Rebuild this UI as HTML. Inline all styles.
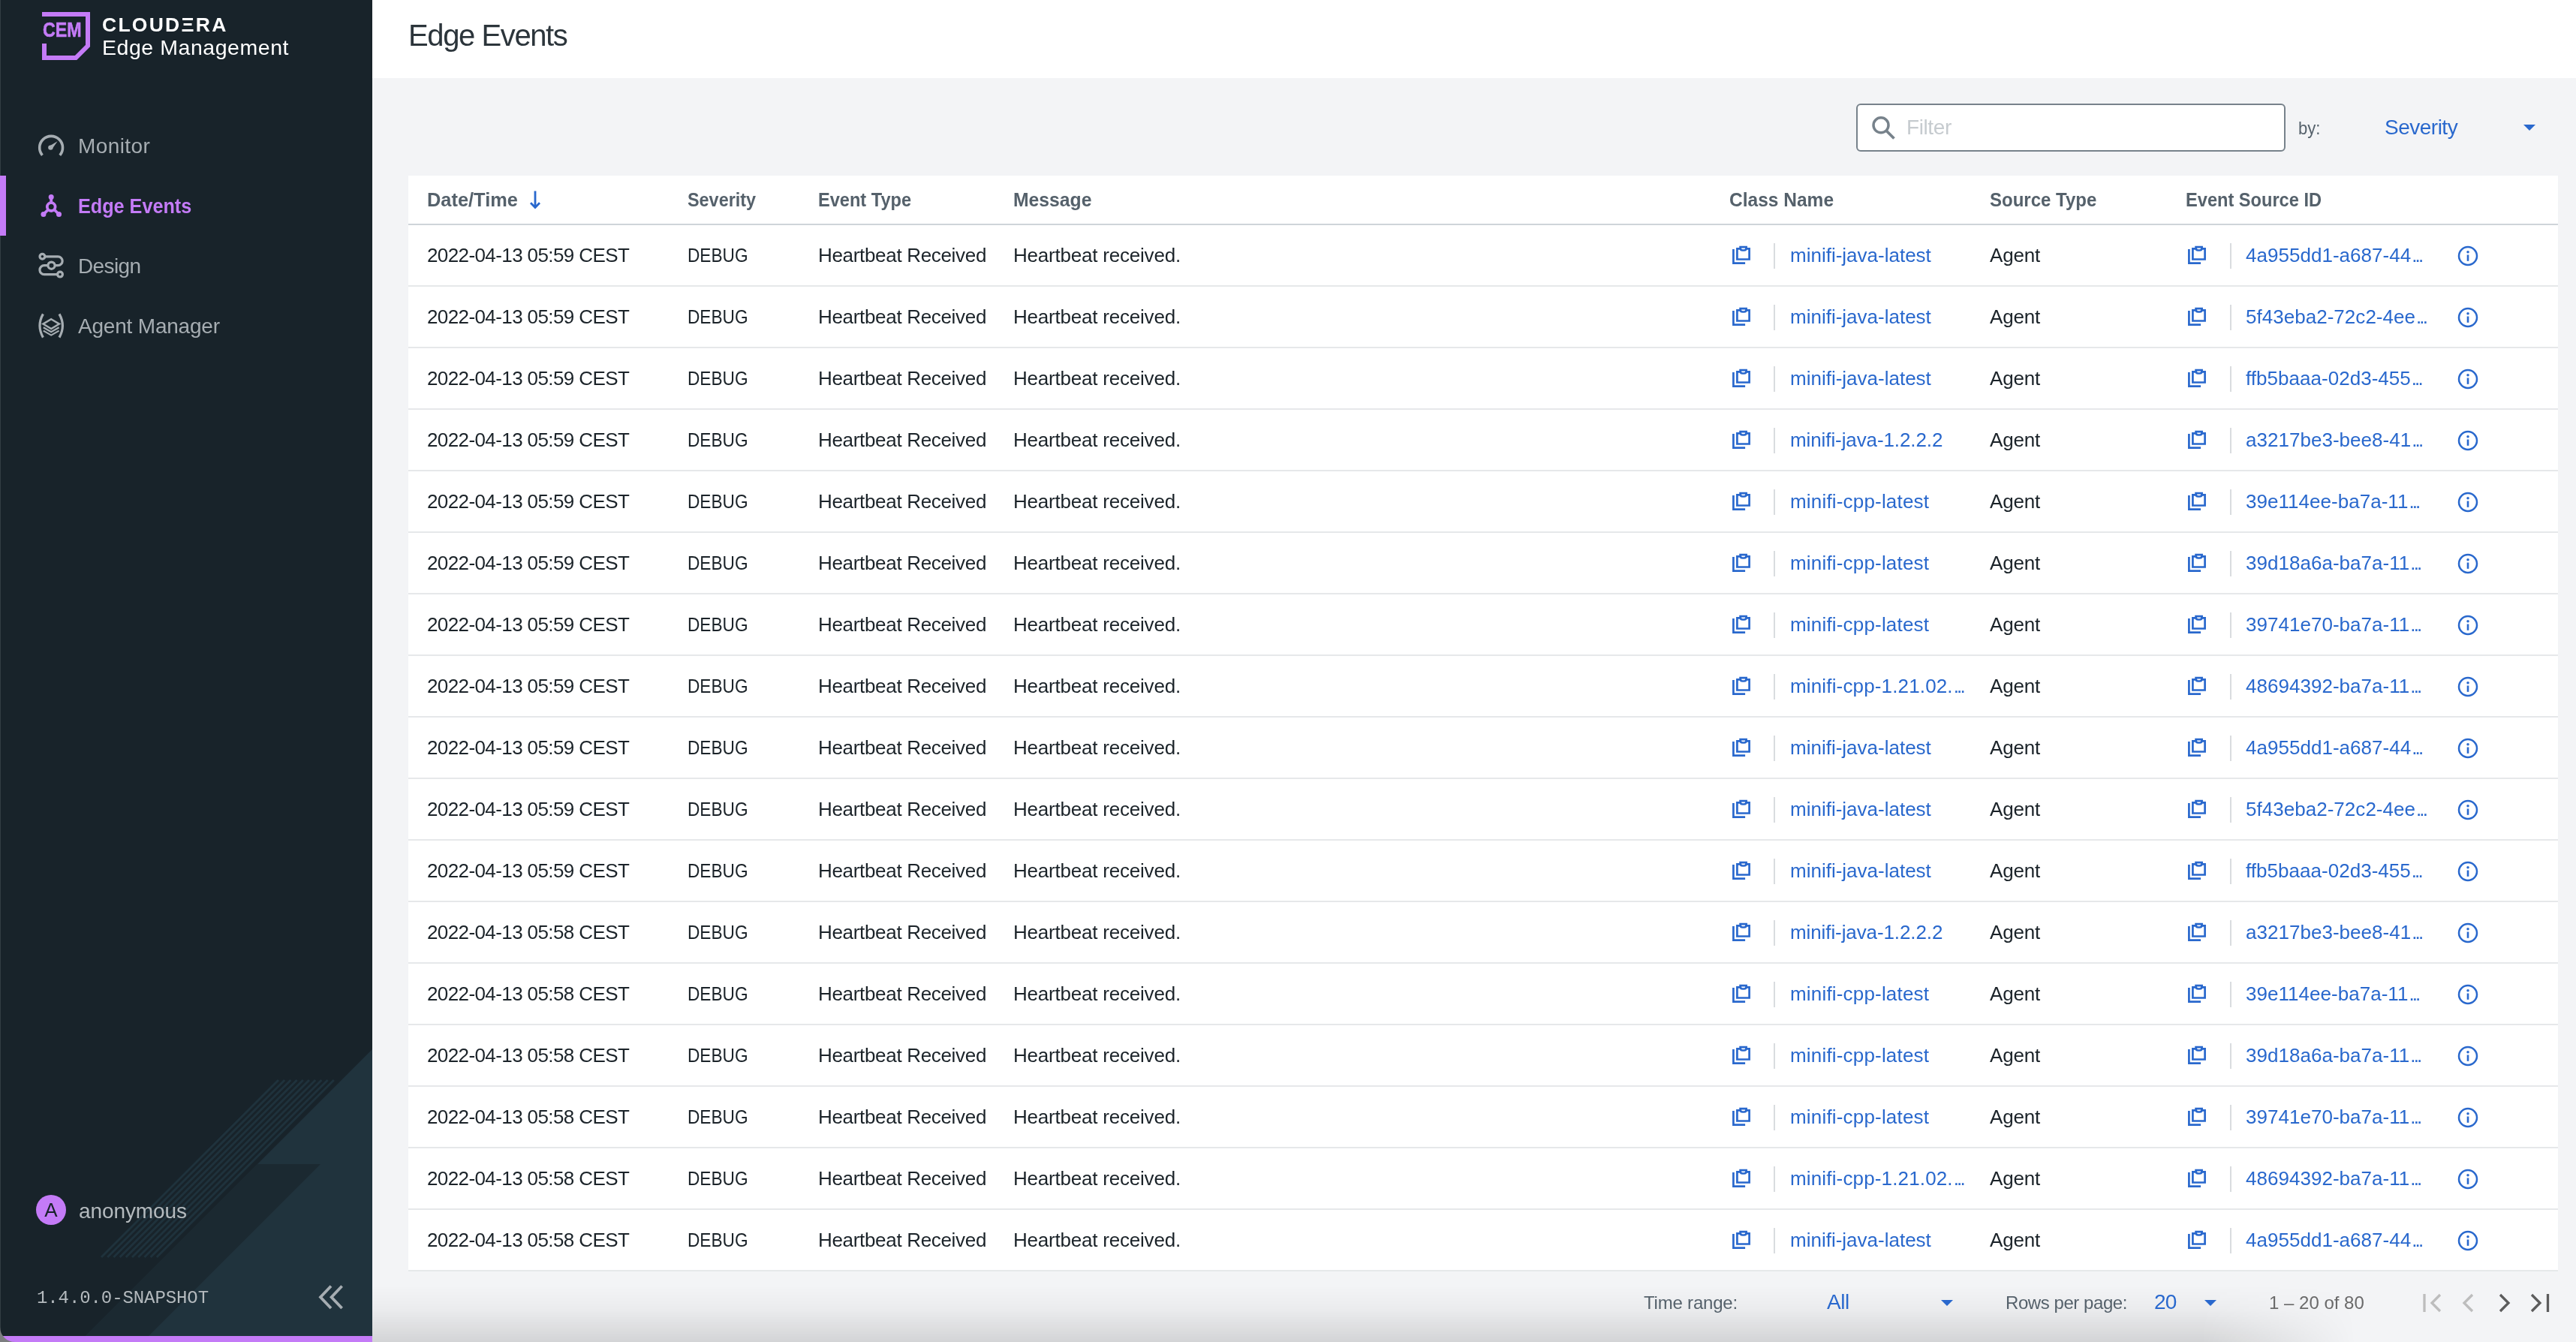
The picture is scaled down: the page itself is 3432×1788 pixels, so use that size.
<!DOCTYPE html>
<html lang="en"><head><meta charset="utf-8"><title>Edge Events</title>
<style>
*{box-sizing:border-box;margin:0;padding:0}
html,body{width:3432px;height:1788px;overflow:hidden}
body{will-change:transform;position:relative;background:#f3f4f6;font-family:"Liberation Sans",sans-serif;color:#1b2329;-webkit-font-smoothing:antialiased}
.abs,.side *,.top *,.foot *{position:absolute}
svg{display:block;overflow:visible}
.sx{display:inline-block;transform:scaleX(var(--s));transform-origin:0 50%;font-style:normal;font-weight:inherit;position:static!important}
.t{white-space:pre;line-height:1}
/* sidebar */
.side{position:absolute;left:0;top:0;width:496px;height:1788px;background:#18232a;overflow:hidden}
.side .deco{left:0;top:1380px;width:496px;height:408px}
.side .bar{left:0;bottom:0;width:496px;height:8px;background:#c47bf7}
.side .edge{left:0;top:0;width:1px;height:1788px;background:#333d43}
.side .active{left:0;top:234px;width:8px;height:80px;background:#c47bf7}
.nav{left:104px;font-size:28px;color:#a6adb2;white-space:pre;line-height:32px}
.nav.on{color:#c47bf7;font-weight:700}
.brand1{left:136px;top:19.5px;font-size:26.5px;font-weight:700;color:#fff;letter-spacing:2.25px;line-height:1;white-space:pre}
.brand2{left:136px;top:49px;font-size:28.5px;color:#fff;letter-spacing:.55px;line-height:1;white-space:pre}
.cem{left:56.5px;top:26.5px;font-size:27px;font-weight:700;color:#c47bf7;-webkit-text-stroke:.6px #c47bf7;line-height:1;white-space:pre}
.user{left:105px;top:1597.5px;font-size:28px;color:#b4babe;line-height:32px;white-space:pre}
.ver{left:49px;top:1716px;font:24px/28px "Liberation Mono",monospace;color:#b4babe;white-space:pre;letter-spacing:-.09px}
.avatar{left:48px;top:1592px;width:40px;height:40px;border-radius:50%;background:#c47bf7;color:#18232a;font-size:26px;line-height:41px;text-align:center}
/* top */
.top{position:absolute;left:496px;top:0;width:2936px;height:234px}
.top .hdr{left:0;top:0;width:2936px;height:104px;background:#fff}
.top .title{left:48px;top:26.7px;font-size:40px;line-height:1;color:#2c353b;white-space:pre;letter-spacing:-1.4px}
.top .inp{left:1977px;top:138px;width:572px;height:64px;border:2px solid #77828b;border-radius:6px;background:#fff}
.top .ph{left:2044px;top:152px;font-size:28px;line-height:36px;color:#c6cbcf;letter-spacing:-.4px;white-space:pre}
.top .by{left:2566px;top:152.5px;font-size:24.5px;line-height:36px;color:#55616b;white-space:pre}
.top .sel{left:2681px;top:152px;font-size:28px;line-height:36px;color:#2968cd;white-space:pre;letter-spacing:-.5px}
/* table */
.tbl{position:absolute;left:544px;top:234px;width:2864px;height:1460px;background:#fff;overflow:hidden}
.thead{position:absolute;left:0;top:0;width:100%;height:66px;border-bottom:2px solid #cfd4d9}
.thead .h{position:absolute;top:0;font-size:26px;font-weight:700;color:#55616b;line-height:64.5px;white-space:pre}
.sort{position:absolute;left:161px;top:19px;width:16px;height:26px}
.tr{position:absolute;left:0;width:100%;height:82px;border-bottom:2px solid #e6e8ea}
.c{position:absolute;top:0;font-size:26px;line-height:80px;white-space:pre}
.dt{letter-spacing:-.6px}
.et{letter-spacing:-.32px}
.ms{letter-spacing:-.21px}
.ag{letter-spacing:-.2px}
.lk{color:#2968cd}
.id{letter-spacing:.03px}
.el{font-style:normal;letter-spacing:-2.9px;margin-left:1px}
.ic{position:absolute;top:27px;width:24px;height:24px}
.cp{width:24px;height:24px}
.cp path{fill:none;stroke:#2968cd;stroke-width:2.7}
.cp path.clip{fill:#fff}
.dv{position:absolute;top:24px;width:2px;height:34px;background:#d9dcdf}
.ii{position:absolute;top:27px;width:28px;height:28px}
.inf{width:28px;height:28px}
/* footer */
.foot{position:absolute;left:496px;top:1694px;width:2936px;height:94px}
.foot .shade{left:0;top:0;width:2936px;height:94px;background:linear-gradient(to bottom,rgba(0,0,0,0) 20%,rgba(0,0,0,.035) 55%,rgba(0,0,0,.13) 100%);-webkit-mask-image:linear-gradient(to right,#000 0,#000 83%,transparent 90%);mask-image:linear-gradient(to right,#000 0,#000 83%,transparent 90%)}
.foot .l{font-size:24px;line-height:30px;color:#55616b;white-space:pre;top:27px}
.foot .v{font-size:28px;line-height:34px;color:#2968cd;white-space:pre;top:24px}

</style></head>
<body>
<div class="side">
<svg class="deco" viewBox="0 1380 496 408">

<path d="M496 1398L114 1780H496Z" fill="#20333d"/><path d="M343 1551H427L198 1780H114Z" fill="#1b2931"/>
<path d="M371.0 1439L135.0 1675M379.2 1439L143.2 1675M387.4 1439L151.4 1675M395.6 1439L159.6 1675M403.8 1439L167.8 1675M412.0 1439L176.0 1675M420.2 1439L184.2 1675M428.4 1439L192.4 1675M436.6 1439L200.6 1675M444.8 1439L208.8 1675" stroke="#1f323c" stroke-width="3" fill="none"/>
</svg>
<div class="edge"></div>
<svg style="left:0;top:1768px;width:20px;height:20px;z-index:3" viewBox="0 0 20 20"><path d="M0 0V20H20A20 20 0 0 1 0 0Z" fill="#7c7e80"/></svg>
<div class="bar"></div>
<div class="active"></div>
<!-- logo -->
<svg style="left:56px;top:16px;width:64px;height:64px" viewBox="0 0 64 64"><path d="M0 3H61V45L45 61H3V42" fill="none" stroke="#c47bf7" stroke-width="6"/></svg>
<span class="cem"><i class="sx" style="--s:.86">CEM</i></span>
<span class="brand1">CLOUD&#926;RA</span>
<span class="brand2">Edge Management</span>
<!-- nav -->
<svg style="left:48px;top:174px;width:40px;height:40px" viewBox="48 174 40 40"><path d="M56.4 206.8A15.4 15.4 0 1 1 79.8 206.8" fill="none" stroke="#a6adb2" stroke-width="3.6"/><circle cx="67.4" cy="196.6" r="3.2" fill="#a6adb2"/><path d="M65.6 194.8L76.6 188.2L69.4 198.6Z" fill="#a6adb2"/></svg>
<span class="nav" style="top:179px;letter-spacing:.4px">Monitor</span>
<svg style="left:48px;top:254px;width:40px;height:40px" viewBox="48 254 40 40"><g stroke="#c47bf7" stroke-width="3.8" fill="none"><circle cx="68.2" cy="275.6" r="5.4"/><path d="M68.2 270V262.5M64 279.5L58 285.3M72.4 279.5L78.4 285.3"/></g><g fill="#c47bf7"><circle cx="68.2" cy="262.5" r="3.5"/><circle cx="57.9" cy="285.4" r="3.5"/><circle cx="78.5" cy="285.4" r="3.5"/></g></svg>
<span class="nav on" style="top:259px"><i class="sx" style="--s:.9">Edge Events</i></span>
<svg style="left:48px;top:334px;width:40px;height:40px" viewBox="48 334 40 40"><g stroke="#a6adb2" stroke-width="3.2" fill="none"><circle cx="56.4" cy="341.8" r="3.4"/><circle cx="68.5" cy="353.7" r="4.6"/><circle cx="80" cy="365.6" r="3.4"/><path d="M59.8 341.8H77.2A5.95 5.95 0 0 1 77.2 353.7H73.1M63.9 353.7H58.9A5.95 5.95 0 0 0 58.9 365.6H76.6"/></g></svg>
<span class="nav" style="top:339px;letter-spacing:-.6px">Design</span>
<svg style="left:48px;top:414px;width:40px;height:40px" viewBox="48 414 40 40"><g stroke="#a6adb2" stroke-width="3.2" fill="none"><path d="M57.4 418.4Q48.6 434 57.4 449.6M79 418.4Q87.8 434 79 449.6"/><path d="M68.2 425.2L79 431.6L68.2 438L57.4 431.6Z" stroke-width="2.4"/><path d="M57.8 436.2L68.2 442.2L78.6 436.2M57.8 440.6L68.2 446.6L78.6 440.6" stroke-width="2.2"/></g></svg>
<span class="nav" style="top:419px;letter-spacing:-.2px">Agent Manager</span>
<!-- user -->
<div class="avatar">A</div>
<span class="user" style="letter-spacing:-.1px">anonymous</span>
<span class="ver">1.4.0.0-SNAPSHOT</span>
<svg style="left:420px;top:1708px;width:40px;height:40px" viewBox="420 1708 40 40"><path d="M441 1713.5L427 1728.2L441 1743M455.6 1713.5L441.6 1728.2L455.6 1743" fill="none" stroke="#a6adb2" stroke-width="3.8"/></svg>
</div>
<div class="top">
<div class="hdr"></div>
<span class="title">Edge Events</span>
<div class="inp"></div>
<svg style="left:1996px;top:153px;width:34px;height:34px" viewBox="2492 153 34 34"><circle cx="2506" cy="166.8" r="10" fill="none" stroke="#77828b" stroke-width="3.5"/><path d="M2513 174L2523.5 184.5" stroke="#77828b" stroke-width="3.8"/></svg>
<span class="ph">Filter</span>
<span class="by"><i class="sx" style="--s:.9">by:</i></span>
<span class="sel">Severity</span>
<svg style="left:2866px;top:166px;width:16px;height:8px" viewBox="0 0 16 8"><path d="M0 0H16L8 8Z" fill="#2968cd"/></svg>
</div>
<div class="tbl">
<div class="thead"><span class="h" style="left:25px"><b class="sx" style="--s:.977">Date/Time</b></span><svg class="sort" viewBox="0 0 16 26"><path d="M8 1.5V23M2 17.2L8 23.4L14 17.2" fill="none" stroke="#2968cd" stroke-width="2.8"/></svg><span class="h" style="left:372px"><b class="sx" style="--s:.90">Severity</b></span><span class="h" style="left:546px"><b class="sx" style="--s:.907">Event Type</b></span><span class="h" style="left:806px"><b class="sx" style="--s:.951">Message</b></span><span class="h" style="left:1760px"><b class="sx" style="--s:.943">Class Name</b></span><span class="h" style="left:2107px"><b class="sx" style="--s:.924">Source Type</b></span><span class="h" style="left:2368px"><b class="sx" style="--s:.908">Event Source ID</b></span></div>
<div class="tr" style="top:66px"><span class="c dt" style="left:25px">2022-04-13 05:59 CEST</span><span class="c" style="left:372px"><i class="sx" style="--s:.871">DEBUG</i></span><span class="c et" style="left:546px">Heartbeat Received</span><span class="c ms" style="left:806px">Heartbeat received.</span><span class="ic" style="left:1764px"><svg class="cp" viewBox="0 0 24 24"><path d="M1.4 5.1V23.6H17.1"/><path d="M6.4 4.4H22.6V18.5H6.4Z"/><path d="M10.6 2.2H18.6V3.2Q18.6 6.5 15.6 6.5H13.6Q10.6 6.5 10.6 3.2Z" class="clip"/></svg></span><span class="dv" style="left:1819px"></span><span class="c lk cn" style="left:1841px;letter-spacing:0px">minifi-java-latest</span><span class="c ag" style="left:2107px">Agent</span><span class="ic" style="left:2371px"><svg class="cp" viewBox="0 0 24 24"><path d="M1.4 5.1V23.6H17.1"/><path d="M6.4 4.4H22.6V18.5H6.4Z"/><path d="M10.6 2.2H18.6V3.2Q18.6 6.5 15.6 6.5H13.6Q10.6 6.5 10.6 3.2Z" class="clip"/></svg></span><span class="dv" style="left:2427px"></span><span class="c lk id" style="left:2448px">4a955dd1-a687-44<i class="el">...</i></span><span class="ii" style="left:2730px"><svg class="inf" viewBox="0 0 28 28"><circle cx="14" cy="14" r="12" fill="none" stroke="#2968cd" stroke-width="2.5"/><circle cx="14" cy="8.7" r="1.75" fill="#2968cd"/><rect x="12.7" y="12.5" width="2.6" height="8.3" fill="#2968cd"/></svg></span></div>
<div class="tr" style="top:148px"><span class="c dt" style="left:25px">2022-04-13 05:59 CEST</span><span class="c" style="left:372px"><i class="sx" style="--s:.871">DEBUG</i></span><span class="c et" style="left:546px">Heartbeat Received</span><span class="c ms" style="left:806px">Heartbeat received.</span><span class="ic" style="left:1764px"><svg class="cp" viewBox="0 0 24 24"><path d="M1.4 5.1V23.6H17.1"/><path d="M6.4 4.4H22.6V18.5H6.4Z"/><path d="M10.6 2.2H18.6V3.2Q18.6 6.5 15.6 6.5H13.6Q10.6 6.5 10.6 3.2Z" class="clip"/></svg></span><span class="dv" style="left:1819px"></span><span class="c lk cn" style="left:1841px;letter-spacing:0px">minifi-java-latest</span><span class="c ag" style="left:2107px">Agent</span><span class="ic" style="left:2371px"><svg class="cp" viewBox="0 0 24 24"><path d="M1.4 5.1V23.6H17.1"/><path d="M6.4 4.4H22.6V18.5H6.4Z"/><path d="M10.6 2.2H18.6V3.2Q18.6 6.5 15.6 6.5H13.6Q10.6 6.5 10.6 3.2Z" class="clip"/></svg></span><span class="dv" style="left:2427px"></span><span class="c lk id" style="left:2448px">5f43eba2-72c2-4ee<i class="el">...</i></span><span class="ii" style="left:2730px"><svg class="inf" viewBox="0 0 28 28"><circle cx="14" cy="14" r="12" fill="none" stroke="#2968cd" stroke-width="2.5"/><circle cx="14" cy="8.7" r="1.75" fill="#2968cd"/><rect x="12.7" y="12.5" width="2.6" height="8.3" fill="#2968cd"/></svg></span></div>
<div class="tr" style="top:230px"><span class="c dt" style="left:25px">2022-04-13 05:59 CEST</span><span class="c" style="left:372px"><i class="sx" style="--s:.871">DEBUG</i></span><span class="c et" style="left:546px">Heartbeat Received</span><span class="c ms" style="left:806px">Heartbeat received.</span><span class="ic" style="left:1764px"><svg class="cp" viewBox="0 0 24 24"><path d="M1.4 5.1V23.6H17.1"/><path d="M6.4 4.4H22.6V18.5H6.4Z"/><path d="M10.6 2.2H18.6V3.2Q18.6 6.5 15.6 6.5H13.6Q10.6 6.5 10.6 3.2Z" class="clip"/></svg></span><span class="dv" style="left:1819px"></span><span class="c lk cn" style="left:1841px;letter-spacing:0px">minifi-java-latest</span><span class="c ag" style="left:2107px">Agent</span><span class="ic" style="left:2371px"><svg class="cp" viewBox="0 0 24 24"><path d="M1.4 5.1V23.6H17.1"/><path d="M6.4 4.4H22.6V18.5H6.4Z"/><path d="M10.6 2.2H18.6V3.2Q18.6 6.5 15.6 6.5H13.6Q10.6 6.5 10.6 3.2Z" class="clip"/></svg></span><span class="dv" style="left:2427px"></span><span class="c lk id" style="left:2448px">ffb5baaa-02d3-455<i class="el">...</i></span><span class="ii" style="left:2730px"><svg class="inf" viewBox="0 0 28 28"><circle cx="14" cy="14" r="12" fill="none" stroke="#2968cd" stroke-width="2.5"/><circle cx="14" cy="8.7" r="1.75" fill="#2968cd"/><rect x="12.7" y="12.5" width="2.6" height="8.3" fill="#2968cd"/></svg></span></div>
<div class="tr" style="top:312px"><span class="c dt" style="left:25px">2022-04-13 05:59 CEST</span><span class="c" style="left:372px"><i class="sx" style="--s:.871">DEBUG</i></span><span class="c et" style="left:546px">Heartbeat Received</span><span class="c ms" style="left:806px">Heartbeat received.</span><span class="ic" style="left:1764px"><svg class="cp" viewBox="0 0 24 24"><path d="M1.4 5.1V23.6H17.1"/><path d="M6.4 4.4H22.6V18.5H6.4Z"/><path d="M10.6 2.2H18.6V3.2Q18.6 6.5 15.6 6.5H13.6Q10.6 6.5 10.6 3.2Z" class="clip"/></svg></span><span class="dv" style="left:1819px"></span><span class="c lk cn" style="left:1841px;letter-spacing:-0.1px">minifi-java-1.2.2.2</span><span class="c ag" style="left:2107px">Agent</span><span class="ic" style="left:2371px"><svg class="cp" viewBox="0 0 24 24"><path d="M1.4 5.1V23.6H17.1"/><path d="M6.4 4.4H22.6V18.5H6.4Z"/><path d="M10.6 2.2H18.6V3.2Q18.6 6.5 15.6 6.5H13.6Q10.6 6.5 10.6 3.2Z" class="clip"/></svg></span><span class="dv" style="left:2427px"></span><span class="c lk id" style="left:2448px">a3217be3-bee8-41<i class="el">...</i></span><span class="ii" style="left:2730px"><svg class="inf" viewBox="0 0 28 28"><circle cx="14" cy="14" r="12" fill="none" stroke="#2968cd" stroke-width="2.5"/><circle cx="14" cy="8.7" r="1.75" fill="#2968cd"/><rect x="12.7" y="12.5" width="2.6" height="8.3" fill="#2968cd"/></svg></span></div>
<div class="tr" style="top:394px"><span class="c dt" style="left:25px">2022-04-13 05:59 CEST</span><span class="c" style="left:372px"><i class="sx" style="--s:.871">DEBUG</i></span><span class="c et" style="left:546px">Heartbeat Received</span><span class="c ms" style="left:806px">Heartbeat received.</span><span class="ic" style="left:1764px"><svg class="cp" viewBox="0 0 24 24"><path d="M1.4 5.1V23.6H17.1"/><path d="M6.4 4.4H22.6V18.5H6.4Z"/><path d="M10.6 2.2H18.6V3.2Q18.6 6.5 15.6 6.5H13.6Q10.6 6.5 10.6 3.2Z" class="clip"/></svg></span><span class="dv" style="left:1819px"></span><span class="c lk cn" style="left:1841px;letter-spacing:0.18px">minifi-cpp-latest</span><span class="c ag" style="left:2107px">Agent</span><span class="ic" style="left:2371px"><svg class="cp" viewBox="0 0 24 24"><path d="M1.4 5.1V23.6H17.1"/><path d="M6.4 4.4H22.6V18.5H6.4Z"/><path d="M10.6 2.2H18.6V3.2Q18.6 6.5 15.6 6.5H13.6Q10.6 6.5 10.6 3.2Z" class="clip"/></svg></span><span class="dv" style="left:2427px"></span><span class="c lk id" style="left:2448px">39e114ee-ba7a-11<i class="el">...</i></span><span class="ii" style="left:2730px"><svg class="inf" viewBox="0 0 28 28"><circle cx="14" cy="14" r="12" fill="none" stroke="#2968cd" stroke-width="2.5"/><circle cx="14" cy="8.7" r="1.75" fill="#2968cd"/><rect x="12.7" y="12.5" width="2.6" height="8.3" fill="#2968cd"/></svg></span></div>
<div class="tr" style="top:476px"><span class="c dt" style="left:25px">2022-04-13 05:59 CEST</span><span class="c" style="left:372px"><i class="sx" style="--s:.871">DEBUG</i></span><span class="c et" style="left:546px">Heartbeat Received</span><span class="c ms" style="left:806px">Heartbeat received.</span><span class="ic" style="left:1764px"><svg class="cp" viewBox="0 0 24 24"><path d="M1.4 5.1V23.6H17.1"/><path d="M6.4 4.4H22.6V18.5H6.4Z"/><path d="M10.6 2.2H18.6V3.2Q18.6 6.5 15.6 6.5H13.6Q10.6 6.5 10.6 3.2Z" class="clip"/></svg></span><span class="dv" style="left:1819px"></span><span class="c lk cn" style="left:1841px;letter-spacing:0.18px">minifi-cpp-latest</span><span class="c ag" style="left:2107px">Agent</span><span class="ic" style="left:2371px"><svg class="cp" viewBox="0 0 24 24"><path d="M1.4 5.1V23.6H17.1"/><path d="M6.4 4.4H22.6V18.5H6.4Z"/><path d="M10.6 2.2H18.6V3.2Q18.6 6.5 15.6 6.5H13.6Q10.6 6.5 10.6 3.2Z" class="clip"/></svg></span><span class="dv" style="left:2427px"></span><span class="c lk id" style="left:2448px">39d18a6a-ba7a-11<i class="el">...</i></span><span class="ii" style="left:2730px"><svg class="inf" viewBox="0 0 28 28"><circle cx="14" cy="14" r="12" fill="none" stroke="#2968cd" stroke-width="2.5"/><circle cx="14" cy="8.7" r="1.75" fill="#2968cd"/><rect x="12.7" y="12.5" width="2.6" height="8.3" fill="#2968cd"/></svg></span></div>
<div class="tr" style="top:558px"><span class="c dt" style="left:25px">2022-04-13 05:59 CEST</span><span class="c" style="left:372px"><i class="sx" style="--s:.871">DEBUG</i></span><span class="c et" style="left:546px">Heartbeat Received</span><span class="c ms" style="left:806px">Heartbeat received.</span><span class="ic" style="left:1764px"><svg class="cp" viewBox="0 0 24 24"><path d="M1.4 5.1V23.6H17.1"/><path d="M6.4 4.4H22.6V18.5H6.4Z"/><path d="M10.6 2.2H18.6V3.2Q18.6 6.5 15.6 6.5H13.6Q10.6 6.5 10.6 3.2Z" class="clip"/></svg></span><span class="dv" style="left:1819px"></span><span class="c lk cn" style="left:1841px;letter-spacing:0.18px">minifi-cpp-latest</span><span class="c ag" style="left:2107px">Agent</span><span class="ic" style="left:2371px"><svg class="cp" viewBox="0 0 24 24"><path d="M1.4 5.1V23.6H17.1"/><path d="M6.4 4.4H22.6V18.5H6.4Z"/><path d="M10.6 2.2H18.6V3.2Q18.6 6.5 15.6 6.5H13.6Q10.6 6.5 10.6 3.2Z" class="clip"/></svg></span><span class="dv" style="left:2427px"></span><span class="c lk id" style="left:2448px">39741e70-ba7a-11<i class="el">...</i></span><span class="ii" style="left:2730px"><svg class="inf" viewBox="0 0 28 28"><circle cx="14" cy="14" r="12" fill="none" stroke="#2968cd" stroke-width="2.5"/><circle cx="14" cy="8.7" r="1.75" fill="#2968cd"/><rect x="12.7" y="12.5" width="2.6" height="8.3" fill="#2968cd"/></svg></span></div>
<div class="tr" style="top:640px"><span class="c dt" style="left:25px">2022-04-13 05:59 CEST</span><span class="c" style="left:372px"><i class="sx" style="--s:.871">DEBUG</i></span><span class="c et" style="left:546px">Heartbeat Received</span><span class="c ms" style="left:806px">Heartbeat received.</span><span class="ic" style="left:1764px"><svg class="cp" viewBox="0 0 24 24"><path d="M1.4 5.1V23.6H17.1"/><path d="M6.4 4.4H22.6V18.5H6.4Z"/><path d="M10.6 2.2H18.6V3.2Q18.6 6.5 15.6 6.5H13.6Q10.6 6.5 10.6 3.2Z" class="clip"/></svg></span><span class="dv" style="left:1819px"></span><span class="c lk cn" style="left:1841px;letter-spacing:0.15px">minifi-cpp-1.21.02.<i class="el">...</i></span><span class="c ag" style="left:2107px">Agent</span><span class="ic" style="left:2371px"><svg class="cp" viewBox="0 0 24 24"><path d="M1.4 5.1V23.6H17.1"/><path d="M6.4 4.4H22.6V18.5H6.4Z"/><path d="M10.6 2.2H18.6V3.2Q18.6 6.5 15.6 6.5H13.6Q10.6 6.5 10.6 3.2Z" class="clip"/></svg></span><span class="dv" style="left:2427px"></span><span class="c lk id" style="left:2448px">48694392-ba7a-11<i class="el">...</i></span><span class="ii" style="left:2730px"><svg class="inf" viewBox="0 0 28 28"><circle cx="14" cy="14" r="12" fill="none" stroke="#2968cd" stroke-width="2.5"/><circle cx="14" cy="8.7" r="1.75" fill="#2968cd"/><rect x="12.7" y="12.5" width="2.6" height="8.3" fill="#2968cd"/></svg></span></div>
<div class="tr" style="top:722px"><span class="c dt" style="left:25px">2022-04-13 05:59 CEST</span><span class="c" style="left:372px"><i class="sx" style="--s:.871">DEBUG</i></span><span class="c et" style="left:546px">Heartbeat Received</span><span class="c ms" style="left:806px">Heartbeat received.</span><span class="ic" style="left:1764px"><svg class="cp" viewBox="0 0 24 24"><path d="M1.4 5.1V23.6H17.1"/><path d="M6.4 4.4H22.6V18.5H6.4Z"/><path d="M10.6 2.2H18.6V3.2Q18.6 6.5 15.6 6.5H13.6Q10.6 6.5 10.6 3.2Z" class="clip"/></svg></span><span class="dv" style="left:1819px"></span><span class="c lk cn" style="left:1841px;letter-spacing:0px">minifi-java-latest</span><span class="c ag" style="left:2107px">Agent</span><span class="ic" style="left:2371px"><svg class="cp" viewBox="0 0 24 24"><path d="M1.4 5.1V23.6H17.1"/><path d="M6.4 4.4H22.6V18.5H6.4Z"/><path d="M10.6 2.2H18.6V3.2Q18.6 6.5 15.6 6.5H13.6Q10.6 6.5 10.6 3.2Z" class="clip"/></svg></span><span class="dv" style="left:2427px"></span><span class="c lk id" style="left:2448px">4a955dd1-a687-44<i class="el">...</i></span><span class="ii" style="left:2730px"><svg class="inf" viewBox="0 0 28 28"><circle cx="14" cy="14" r="12" fill="none" stroke="#2968cd" stroke-width="2.5"/><circle cx="14" cy="8.7" r="1.75" fill="#2968cd"/><rect x="12.7" y="12.5" width="2.6" height="8.3" fill="#2968cd"/></svg></span></div>
<div class="tr" style="top:804px"><span class="c dt" style="left:25px">2022-04-13 05:59 CEST</span><span class="c" style="left:372px"><i class="sx" style="--s:.871">DEBUG</i></span><span class="c et" style="left:546px">Heartbeat Received</span><span class="c ms" style="left:806px">Heartbeat received.</span><span class="ic" style="left:1764px"><svg class="cp" viewBox="0 0 24 24"><path d="M1.4 5.1V23.6H17.1"/><path d="M6.4 4.4H22.6V18.5H6.4Z"/><path d="M10.6 2.2H18.6V3.2Q18.6 6.5 15.6 6.5H13.6Q10.6 6.5 10.6 3.2Z" class="clip"/></svg></span><span class="dv" style="left:1819px"></span><span class="c lk cn" style="left:1841px;letter-spacing:0px">minifi-java-latest</span><span class="c ag" style="left:2107px">Agent</span><span class="ic" style="left:2371px"><svg class="cp" viewBox="0 0 24 24"><path d="M1.4 5.1V23.6H17.1"/><path d="M6.4 4.4H22.6V18.5H6.4Z"/><path d="M10.6 2.2H18.6V3.2Q18.6 6.5 15.6 6.5H13.6Q10.6 6.5 10.6 3.2Z" class="clip"/></svg></span><span class="dv" style="left:2427px"></span><span class="c lk id" style="left:2448px">5f43eba2-72c2-4ee<i class="el">...</i></span><span class="ii" style="left:2730px"><svg class="inf" viewBox="0 0 28 28"><circle cx="14" cy="14" r="12" fill="none" stroke="#2968cd" stroke-width="2.5"/><circle cx="14" cy="8.7" r="1.75" fill="#2968cd"/><rect x="12.7" y="12.5" width="2.6" height="8.3" fill="#2968cd"/></svg></span></div>
<div class="tr" style="top:886px"><span class="c dt" style="left:25px">2022-04-13 05:59 CEST</span><span class="c" style="left:372px"><i class="sx" style="--s:.871">DEBUG</i></span><span class="c et" style="left:546px">Heartbeat Received</span><span class="c ms" style="left:806px">Heartbeat received.</span><span class="ic" style="left:1764px"><svg class="cp" viewBox="0 0 24 24"><path d="M1.4 5.1V23.6H17.1"/><path d="M6.4 4.4H22.6V18.5H6.4Z"/><path d="M10.6 2.2H18.6V3.2Q18.6 6.5 15.6 6.5H13.6Q10.6 6.5 10.6 3.2Z" class="clip"/></svg></span><span class="dv" style="left:1819px"></span><span class="c lk cn" style="left:1841px;letter-spacing:0px">minifi-java-latest</span><span class="c ag" style="left:2107px">Agent</span><span class="ic" style="left:2371px"><svg class="cp" viewBox="0 0 24 24"><path d="M1.4 5.1V23.6H17.1"/><path d="M6.4 4.4H22.6V18.5H6.4Z"/><path d="M10.6 2.2H18.6V3.2Q18.6 6.5 15.6 6.5H13.6Q10.6 6.5 10.6 3.2Z" class="clip"/></svg></span><span class="dv" style="left:2427px"></span><span class="c lk id" style="left:2448px">ffb5baaa-02d3-455<i class="el">...</i></span><span class="ii" style="left:2730px"><svg class="inf" viewBox="0 0 28 28"><circle cx="14" cy="14" r="12" fill="none" stroke="#2968cd" stroke-width="2.5"/><circle cx="14" cy="8.7" r="1.75" fill="#2968cd"/><rect x="12.7" y="12.5" width="2.6" height="8.3" fill="#2968cd"/></svg></span></div>
<div class="tr" style="top:968px"><span class="c dt" style="left:25px">2022-04-13 05:58 CEST</span><span class="c" style="left:372px"><i class="sx" style="--s:.871">DEBUG</i></span><span class="c et" style="left:546px">Heartbeat Received</span><span class="c ms" style="left:806px">Heartbeat received.</span><span class="ic" style="left:1764px"><svg class="cp" viewBox="0 0 24 24"><path d="M1.4 5.1V23.6H17.1"/><path d="M6.4 4.4H22.6V18.5H6.4Z"/><path d="M10.6 2.2H18.6V3.2Q18.6 6.5 15.6 6.5H13.6Q10.6 6.5 10.6 3.2Z" class="clip"/></svg></span><span class="dv" style="left:1819px"></span><span class="c lk cn" style="left:1841px;letter-spacing:-0.1px">minifi-java-1.2.2.2</span><span class="c ag" style="left:2107px">Agent</span><span class="ic" style="left:2371px"><svg class="cp" viewBox="0 0 24 24"><path d="M1.4 5.1V23.6H17.1"/><path d="M6.4 4.4H22.6V18.5H6.4Z"/><path d="M10.6 2.2H18.6V3.2Q18.6 6.5 15.6 6.5H13.6Q10.6 6.5 10.6 3.2Z" class="clip"/></svg></span><span class="dv" style="left:2427px"></span><span class="c lk id" style="left:2448px">a3217be3-bee8-41<i class="el">...</i></span><span class="ii" style="left:2730px"><svg class="inf" viewBox="0 0 28 28"><circle cx="14" cy="14" r="12" fill="none" stroke="#2968cd" stroke-width="2.5"/><circle cx="14" cy="8.7" r="1.75" fill="#2968cd"/><rect x="12.7" y="12.5" width="2.6" height="8.3" fill="#2968cd"/></svg></span></div>
<div class="tr" style="top:1050px"><span class="c dt" style="left:25px">2022-04-13 05:58 CEST</span><span class="c" style="left:372px"><i class="sx" style="--s:.871">DEBUG</i></span><span class="c et" style="left:546px">Heartbeat Received</span><span class="c ms" style="left:806px">Heartbeat received.</span><span class="ic" style="left:1764px"><svg class="cp" viewBox="0 0 24 24"><path d="M1.4 5.1V23.6H17.1"/><path d="M6.4 4.4H22.6V18.5H6.4Z"/><path d="M10.6 2.2H18.6V3.2Q18.6 6.5 15.6 6.5H13.6Q10.6 6.5 10.6 3.2Z" class="clip"/></svg></span><span class="dv" style="left:1819px"></span><span class="c lk cn" style="left:1841px;letter-spacing:0.18px">minifi-cpp-latest</span><span class="c ag" style="left:2107px">Agent</span><span class="ic" style="left:2371px"><svg class="cp" viewBox="0 0 24 24"><path d="M1.4 5.1V23.6H17.1"/><path d="M6.4 4.4H22.6V18.5H6.4Z"/><path d="M10.6 2.2H18.6V3.2Q18.6 6.5 15.6 6.5H13.6Q10.6 6.5 10.6 3.2Z" class="clip"/></svg></span><span class="dv" style="left:2427px"></span><span class="c lk id" style="left:2448px">39e114ee-ba7a-11<i class="el">...</i></span><span class="ii" style="left:2730px"><svg class="inf" viewBox="0 0 28 28"><circle cx="14" cy="14" r="12" fill="none" stroke="#2968cd" stroke-width="2.5"/><circle cx="14" cy="8.7" r="1.75" fill="#2968cd"/><rect x="12.7" y="12.5" width="2.6" height="8.3" fill="#2968cd"/></svg></span></div>
<div class="tr" style="top:1132px"><span class="c dt" style="left:25px">2022-04-13 05:58 CEST</span><span class="c" style="left:372px"><i class="sx" style="--s:.871">DEBUG</i></span><span class="c et" style="left:546px">Heartbeat Received</span><span class="c ms" style="left:806px">Heartbeat received.</span><span class="ic" style="left:1764px"><svg class="cp" viewBox="0 0 24 24"><path d="M1.4 5.1V23.6H17.1"/><path d="M6.4 4.4H22.6V18.5H6.4Z"/><path d="M10.6 2.2H18.6V3.2Q18.6 6.5 15.6 6.5H13.6Q10.6 6.5 10.6 3.2Z" class="clip"/></svg></span><span class="dv" style="left:1819px"></span><span class="c lk cn" style="left:1841px;letter-spacing:0.18px">minifi-cpp-latest</span><span class="c ag" style="left:2107px">Agent</span><span class="ic" style="left:2371px"><svg class="cp" viewBox="0 0 24 24"><path d="M1.4 5.1V23.6H17.1"/><path d="M6.4 4.4H22.6V18.5H6.4Z"/><path d="M10.6 2.2H18.6V3.2Q18.6 6.5 15.6 6.5H13.6Q10.6 6.5 10.6 3.2Z" class="clip"/></svg></span><span class="dv" style="left:2427px"></span><span class="c lk id" style="left:2448px">39d18a6a-ba7a-11<i class="el">...</i></span><span class="ii" style="left:2730px"><svg class="inf" viewBox="0 0 28 28"><circle cx="14" cy="14" r="12" fill="none" stroke="#2968cd" stroke-width="2.5"/><circle cx="14" cy="8.7" r="1.75" fill="#2968cd"/><rect x="12.7" y="12.5" width="2.6" height="8.3" fill="#2968cd"/></svg></span></div>
<div class="tr" style="top:1214px"><span class="c dt" style="left:25px">2022-04-13 05:58 CEST</span><span class="c" style="left:372px"><i class="sx" style="--s:.871">DEBUG</i></span><span class="c et" style="left:546px">Heartbeat Received</span><span class="c ms" style="left:806px">Heartbeat received.</span><span class="ic" style="left:1764px"><svg class="cp" viewBox="0 0 24 24"><path d="M1.4 5.1V23.6H17.1"/><path d="M6.4 4.4H22.6V18.5H6.4Z"/><path d="M10.6 2.2H18.6V3.2Q18.6 6.5 15.6 6.5H13.6Q10.6 6.5 10.6 3.2Z" class="clip"/></svg></span><span class="dv" style="left:1819px"></span><span class="c lk cn" style="left:1841px;letter-spacing:0.18px">minifi-cpp-latest</span><span class="c ag" style="left:2107px">Agent</span><span class="ic" style="left:2371px"><svg class="cp" viewBox="0 0 24 24"><path d="M1.4 5.1V23.6H17.1"/><path d="M6.4 4.4H22.6V18.5H6.4Z"/><path d="M10.6 2.2H18.6V3.2Q18.6 6.5 15.6 6.5H13.6Q10.6 6.5 10.6 3.2Z" class="clip"/></svg></span><span class="dv" style="left:2427px"></span><span class="c lk id" style="left:2448px">39741e70-ba7a-11<i class="el">...</i></span><span class="ii" style="left:2730px"><svg class="inf" viewBox="0 0 28 28"><circle cx="14" cy="14" r="12" fill="none" stroke="#2968cd" stroke-width="2.5"/><circle cx="14" cy="8.7" r="1.75" fill="#2968cd"/><rect x="12.7" y="12.5" width="2.6" height="8.3" fill="#2968cd"/></svg></span></div>
<div class="tr" style="top:1296px"><span class="c dt" style="left:25px">2022-04-13 05:58 CEST</span><span class="c" style="left:372px"><i class="sx" style="--s:.871">DEBUG</i></span><span class="c et" style="left:546px">Heartbeat Received</span><span class="c ms" style="left:806px">Heartbeat received.</span><span class="ic" style="left:1764px"><svg class="cp" viewBox="0 0 24 24"><path d="M1.4 5.1V23.6H17.1"/><path d="M6.4 4.4H22.6V18.5H6.4Z"/><path d="M10.6 2.2H18.6V3.2Q18.6 6.5 15.6 6.5H13.6Q10.6 6.5 10.6 3.2Z" class="clip"/></svg></span><span class="dv" style="left:1819px"></span><span class="c lk cn" style="left:1841px;letter-spacing:0.15px">minifi-cpp-1.21.02.<i class="el">...</i></span><span class="c ag" style="left:2107px">Agent</span><span class="ic" style="left:2371px"><svg class="cp" viewBox="0 0 24 24"><path d="M1.4 5.1V23.6H17.1"/><path d="M6.4 4.4H22.6V18.5H6.4Z"/><path d="M10.6 2.2H18.6V3.2Q18.6 6.5 15.6 6.5H13.6Q10.6 6.5 10.6 3.2Z" class="clip"/></svg></span><span class="dv" style="left:2427px"></span><span class="c lk id" style="left:2448px">48694392-ba7a-11<i class="el">...</i></span><span class="ii" style="left:2730px"><svg class="inf" viewBox="0 0 28 28"><circle cx="14" cy="14" r="12" fill="none" stroke="#2968cd" stroke-width="2.5"/><circle cx="14" cy="8.7" r="1.75" fill="#2968cd"/><rect x="12.7" y="12.5" width="2.6" height="8.3" fill="#2968cd"/></svg></span></div>
<div class="tr" style="top:1378px"><span class="c dt" style="left:25px">2022-04-13 05:58 CEST</span><span class="c" style="left:372px"><i class="sx" style="--s:.871">DEBUG</i></span><span class="c et" style="left:546px">Heartbeat Received</span><span class="c ms" style="left:806px">Heartbeat received.</span><span class="ic" style="left:1764px"><svg class="cp" viewBox="0 0 24 24"><path d="M1.4 5.1V23.6H17.1"/><path d="M6.4 4.4H22.6V18.5H6.4Z"/><path d="M10.6 2.2H18.6V3.2Q18.6 6.5 15.6 6.5H13.6Q10.6 6.5 10.6 3.2Z" class="clip"/></svg></span><span class="dv" style="left:1819px"></span><span class="c lk cn" style="left:1841px;letter-spacing:0px">minifi-java-latest</span><span class="c ag" style="left:2107px">Agent</span><span class="ic" style="left:2371px"><svg class="cp" viewBox="0 0 24 24"><path d="M1.4 5.1V23.6H17.1"/><path d="M6.4 4.4H22.6V18.5H6.4Z"/><path d="M10.6 2.2H18.6V3.2Q18.6 6.5 15.6 6.5H13.6Q10.6 6.5 10.6 3.2Z" class="clip"/></svg></span><span class="dv" style="left:2427px"></span><span class="c lk id" style="left:2448px">4a955dd1-a687-44<i class="el">...</i></span><span class="ii" style="left:2730px"><svg class="inf" viewBox="0 0 28 28"><circle cx="14" cy="14" r="12" fill="none" stroke="#2968cd" stroke-width="2.5"/><circle cx="14" cy="8.7" r="1.75" fill="#2968cd"/><rect x="12.7" y="12.5" width="2.6" height="8.3" fill="#2968cd"/></svg></span></div>
</div>
<div class="foot">
<div class="shade"></div>
<span class="l" style="left:1694px;letter-spacing:-.2px">Time range:</span>
<span class="v" style="left:1938px;letter-spacing:-.4px">All</span>
<svg style="left:2090px;top:38px;width:16px;height:8px" viewBox="0 0 16 8"><path d="M0 0H16L8 8Z" fill="#2968cd"/></svg>
<span class="l" style="left:2176px;letter-spacing:-.44px">Rows per page:</span>
<span class="v" style="left:2374px;letter-spacing:-.8px">20</span>
<svg style="left:2441px;top:38px;width:16px;height:8px" viewBox="0 0 16 8"><path d="M0 0H16L8 8Z" fill="#2968cd"/></svg>
<span class="l" style="left:2527px;color:#6a6a6a">1 – 20 of 80</span>
<svg style="left:2728px;top:28px;width:176px;height:28px" viewBox="3224 1722 176 28"><g fill="none" stroke-width="3.3"><path d="M3230 1724V1748M3251 1725L3240 1736L3251 1747M3294 1725L3283 1736L3294 1747" stroke="#bdbdbd"/><path d="M3331 1725L3342 1736L3331 1747M3373 1725L3384 1736L3373 1747M3394.5 1724V1748" stroke="#5c5c5c"/></g></svg>
</div>
</body></html>
